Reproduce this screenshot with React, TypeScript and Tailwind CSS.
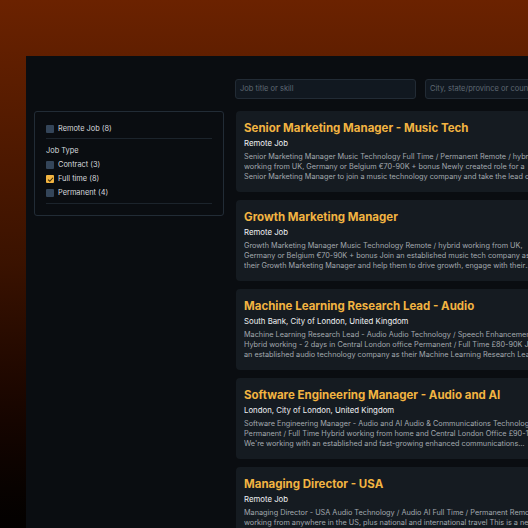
import React from "react";

type Job = { title: string; place: string; desc: string };

const jobs: Job[] = [
  {
    title: "Senior Marketing Manager - Music Tech",
    place: "Remote Job",
    desc: "Senior Marketing Manager Music Technology Full Time / Permanent Remote / hybrid working from UK, Germany or Belgium €70-90K + bonus Newly created role for a Senior Marketing Manager to join a music technology company and take the lead on their marketing strategy and growth.",
  },
  {
    title: "Growth Marketing Manager",
    place: "Remote Job",
    desc: "Growth Marketing Manager Music Technology Remote / hybrid working from UK, Germany or Belgium €70-90K + bonus Join an established music tech company as their Growth Marketing Manager and help them to drive growth, engage with their community and more.",
  },
  {
    title: "Machine Learning Research Lead - Audio",
    place: "South Bank, City of London, United Kingdom",
    desc: "Machine Learning Research Lead - Audio Audio Technology / Speech Enhancement Hybrid working - 2 days in Central London office Permanent / Full Time £80-90K Join an established audio technology company as their Machine Learning Research Lead and more.",
  },
  {
    title: "Software Engineering Manager - Audio and AI",
    place: "London, City of London, United Kingdom",
    desc: "Software Engineering Manager - Audio and AI Audio & Communications Technology Permanent / Full Time Hybrid working from home and Central London Office £90-110K We're working with an established and fast-growing enhanced communications company.",
  },
  {
    title: "Managing Director - USA",
    place: "Remote Job",
    desc: "Managing Director - USA Audio Technology / Audio AI Full Time / Permanent Remote working from anywhere in the US, plus national and international travel This is a new role for an experienced leader.",
  },
];

function Box({ checked }: { checked?: boolean }) {
  return checked ? (
    <span className="flex h-[8px] w-[8px] items-center justify-center rounded-[1px] bg-[#f2b441]">
      <svg viewBox="0 0 10 10" className="h-[7px] w-[7px]">
        <path d="M1.5 5.2 L4 7.5 L8.5 2.5" fill="none" stroke="#3a2a08" strokeWidth="1.6" />
      </svg>
    </span>
  ) : (
    <span className="h-[8px] w-[8px] rounded-[1px] bg-[#344559]" />
  );
}

function Check({ label, checked }: { label: string; checked?: boolean }) {
  return (
    <div className="flex h-[14px] items-center gap-[4px] text-[7.4px] text-[#d6d9dd]">
      <Box checked={checked} />
      <span>{label}</span>
    </div>
  );
}

export default function App() {
  return (
    <div
      className="h-[528px] w-[528px] overflow-hidden bg-gradient-to-b from-[#6b2200] via-[#3a1200] to-[#030100] pl-[26px] pt-[56px]"
      style={{ fontFamily: "Inter, 'Liberation Sans', sans-serif" }}
    >
      <div className="grid h-full w-[580px] grid-cols-[190px_1fr] content-start gap-x-[11px] gap-y-[12px] bg-[#0a0d11] pl-2 pt-[23px]">
        <div />
        <div className="flex gap-[9px]">
          <div className="flex h-[20px] w-[181px] items-center rounded-[3px] border border-[#222b35] bg-[#111820] px-[4px] text-[7.5px] text-[#5f6873]">
            Job title or skill
          </div>
          <div className="flex h-[20px] w-[200px] items-center rounded-[3px] border border-[#222b35] bg-[#111820] px-[4px] text-[7.5px] text-[#5f6873]">
            City, state/province or country
          </div>
        </div>

        <div className="self-start rounded-[3px] border border-[#222c36] px-[11px] pt-[10px] pb-[11px]">
          <Check label="Remote Job (8)" />
          <div className="mt-[2px] mb-[5px] h-px bg-[#1c242c]" />
          <div className="flex h-[14px] items-center text-[7.4px] text-[#d6d9dd]">Job Type</div>
          <Check label="Contract (3)" />
          <Check label="Full time (8)" checked />
          <Check label="Permanent (4)" />
          <div className="mt-[3px] h-px bg-[#1c242c]" />
        </div>

        <div className="flex flex-col gap-[8px] pl-[1px]">
          {jobs.map((j) => (
            <div key={j.title} className="w-[320px] rounded-[4px] bg-[#151b21] px-2 pt-[9px] pb-[10px]">
              <div className="text-[11.5px] font-bold leading-[16px] text-[#f2b441]">{j.title}</div>
              <div className="mt-[1px] text-[7.8px] leading-[12px] text-[#eef0f2]">{j.place}</div>
              <div className="mt-[3px] line-clamp-3 w-[299px] text-[7.3px] leading-[10px] text-[#a3a9af]">{j.desc}</div>
            </div>
          ))}
        </div>
      </div>
    </div>
  );
}
